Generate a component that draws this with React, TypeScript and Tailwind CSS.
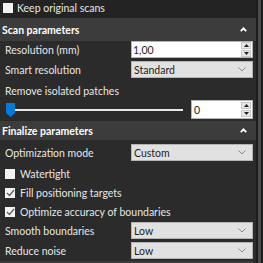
import React from 'react';

const font = { fontFamily: 'Lato, "Noto Sans", sans-serif' };

const Caret: React.FC = () => (
  <svg width="7" height="5" viewBox="0 0 7 5" className="mr-[9px]">
    <path d="M0.8 4.2 L3.5 1.3 L6.2 4.2" fill="none" stroke="#ffffff" strokeWidth="1.8" />
  </svg>
);

const Chevron: React.FC = () => (
  <svg width="8" height="5" viewBox="0 0 8 5">
    <path d="M0.5 0.5 L4 4 L7.5 0.5" fill="none" stroke="#8a8a8a" strokeWidth="1" />
  </svg>
);

const Spin: React.FC = () => (
  <div className="flex flex-col gap-[1px] mr-[1px]">
    <div className="w-[10px] h-[7px] bg-[#e6e6e6] border border-[#c8c8c8] flex items-center justify-center">
      <svg width="5" height="3" viewBox="0 0 5 3"><path d="M0 3 L2.5 0 L5 3 Z" fill="#222" /></svg>
    </div>
    <div className="w-[10px] h-[7px] bg-[#e6e6e6] border border-[#c8c8c8] flex items-center justify-center">
      <svg width="5" height="3" viewBox="0 0 5 3"><path d="M0 0 L2.5 3 L5 0 Z" fill="#222" /></svg>
    </div>
  </div>
);

const Check: React.FC<{ checked?: boolean }> = ({ checked }) => (
  <div className="w-[10px] h-[10px] bg-[#f2f2f2] flex items-center justify-center shrink-0">
    {checked && (
      <svg width="9" height="8" viewBox="0 0 9 8">
        <path d="M1 4 L3.5 6.5 L8 1" fill="none" stroke="#5a5a5a" strokeWidth="1.2" />
      </svg>
    )}
  </div>
);

const Header: React.FC<{ title: string; h: string }> = ({ title, h }) => (
  <div className={`${h} bg-[#3c3c3c] flex items-center justify-between pl-[2px] -mr-[3px]`}>
    <span className="font-bold text-white text-[10.5px]">{title}</span>
    <Caret />
  </div>
);

const SelectBox: React.FC<{ value: string }> = ({ value }) => (
  <div className="w-[122px] h-[17px] bg-[#e1e1e1] border border-[#b4b4b4] flex items-center justify-between pl-[2px] pr-[6px] text-[#1e1e1e]">
    <span>{value}</span>
    <Chevron />
  </div>
);

const SelectRow: React.FC<{ label: string; value: string; mt: string }> = ({ label, value, mt }) => (
  <div className={`flex items-center ${mt}`}>
    <span className="w-[131px] pl-[5px]">{label}</span>
    <SelectBox value={value} />
  </div>
);

const CheckRow: React.FC<{ label: string; checked?: boolean; mt: string }> = ({ label, checked, mt }) => (
  <div className={`flex items-center gap-[5px] pl-[5px] h-[13px] ${mt}`}>
    <Check checked={checked} />
    <span>{label}</span>
  </div>
);

export default function App() {
  return (
    <div className="w-[263px] h-[263px] overflow-hidden flex bg-[#2b2b2b] text-[10.5px] leading-[14px] text-[#e6e6e6]" style={font}>
      <div className="w-[256px] pr-[3px]">
        <div className="h-[18px] bg-[#232323] -mr-[3px] flex items-start pt-[3px] pl-[3px] gap-[4px]">
          <Check />
          <span className="leading-[10px]">Keep original scans</span>
        </div>
        <Header title="Scan parameters" h="h-[23px]" />
        <div className="flex items-center">
          <span className="w-[131px] pl-[5px]">Resolution (mm)</span>
          <div className="w-[122px] h-[17px] bg-white border border-[#b4b4b4] flex items-center justify-between pl-[1px] text-[#1e1e1e]">
            <span>1,00</span>
            <Spin />
          </div>
        </div>
        <SelectRow label="Smart resolution" value="Standard" mt="mt-[3px]" />
        <div className="mt-[6px] pl-[5px] h-[14px] flex items-center">Remove isolated patches</div>
        <div className="flex items-center h-[19px] mt-[2px]">
          <div className="relative w-[178px] ml-[6px] h-[14px] flex items-center">
            <div className="ml-[7px] w-[170px] h-[2px] bg-[#e8e8e8]" />
            <svg width="9" height="14" viewBox="0 0 9 14" className="absolute left-0 top-0">
              <path d="M0 0 H9 V10 L4.5 14 L0 10 Z" fill="#0a78d7" />
            </svg>
          </div>
          <div className="ml-[7px] w-[62px] h-[19px] bg-white border border-[#b4b4b4] flex items-center justify-between pl-[2px] text-[#1e1e1e]">
            <span>0</span>
            <Spin />
          </div>
        </div>
        <div className="mt-[2px]">
          <Header title="Finalize parameters" h="h-[19px]" />
        </div>
        <SelectRow label="Optimization mode" value="Custom" mt="mt-[4px]" />
        <CheckRow label="Watertight" mt="mt-[6px]" />
        <CheckRow label="Fill positioning targets" checked mt="mt-[6px]" />
        <CheckRow label="Optimize accuracy of boundaries" checked mt="mt-[6px]" />
        <SelectRow label="Smooth boundaries" value="Low" mt="mt-[4px]" />
        <SelectRow label="Reduce noise" value="Low" mt="mt-[3px]" />
        <div className="mt-[2px] h-[10px] bg-[#3c3c3c]" />
      </div>
      <div className="w-[7px] bg-[#1e1e1e] flex justify-center">
        <div className="w-[3px] h-full bg-[#4a4a4a]" />
      </div>
    </div>
  );
}
